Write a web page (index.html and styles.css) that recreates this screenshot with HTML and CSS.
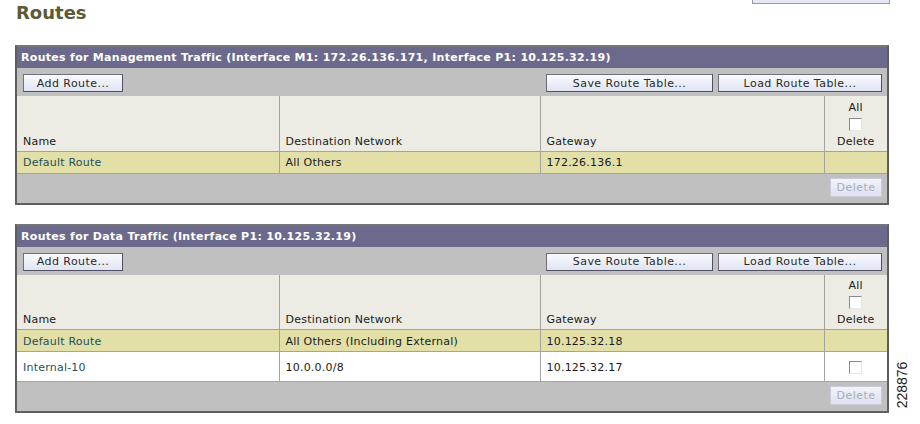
FILE: index.html
```html
<!DOCTYPE html>
<html lang="en">
<head>
  <meta charset="UTF-8" />
  <title>Routes</title>
  <link rel="stylesheet" href="styles.css">
</head>
<body>
  <div class="top-bar">
    <h1 class="page-title">Routes</h1>
    <div class="cut-button"></div>
  </div>

  <div class="panel">
    <div class="panel-head">Routes for Management Traffic (Interface M1: 172.26.136.171, Interface P1: 10.125.32.19)</div>
    <div class="toolbar">
      <button class="btn">Add Route...</button>
      <div class="toolbar-right">
        <button class="btn btn-save">Save Route Table...</button>
        <button class="btn btn-load">Load Route Table...</button>
      </div>
    </div>
    <table class="routes">
      <colgroup>
        <col class="col-name"><col class="col-dest"><col class="col-gw"><col>
      </colgroup>
      <tr class="head-row">
        <th>Name</th>
        <th>Destination Network</th>
        <th>Gateway</th>
        <th class="col-del">All<span class="check"></span>Delete</th>
      </tr>
      <tr class="row-default">
        <td><span class="link">Default Route</span></td>
        <td>All Others</td>
        <td>172.26.136.1</td>
        <td></td>
      </tr>
    </table>
    <div class="panel-foot">
      <button class="btn btn-del" disabled>Delete</button>
    </div>
  </div>

  <div class="panel">
    <div class="panel-head">Routes for Data Traffic (Interface P1: 10.125.32.19)</div>
    <div class="toolbar">
      <button class="btn">Add Route...</button>
      <div class="toolbar-right">
        <button class="btn btn-save">Save Route Table...</button>
        <button class="btn btn-load">Load Route Table...</button>
      </div>
    </div>
    <table class="routes">
      <colgroup>
        <col class="col-name"><col class="col-dest"><col class="col-gw"><col>
      </colgroup>
      <tr class="head-row">
        <th>Name</th>
        <th>Destination Network</th>
        <th>Gateway</th>
        <th class="col-del">All<span class="check"></span>Delete</th>
      </tr>
      <tr class="row-default">
        <td><span class="link">Default Route</span></td>
        <td>All Others (Including External)</td>
        <td>10.125.32.18</td>
        <td></td>
      </tr>
      <tr class="row-plain">
        <td><span class="link">Internal-10</span></td>
        <td>10.0.0.0/8</td>
        <td>10.125.32.17</td>
        <td class="cell-check"><span class="check"></span></td>
      </tr>
    </table>
    <div class="panel-foot">
      <button class="btn btn-del" disabled>Delete</button>
    </div>
  </div>

  <div class="fig-id">228876</div>
</body>
</html>
```

FILE: styles.css
```css
body {
  margin: 0;
  padding: 0 31px 0 15px;
  font-family: "DejaVu Sans", Verdana, sans-serif;
  font-size: 11px;
  letter-spacing: 0.22px;
  color: #1a1a1a;
  background: #fff;
  position: relative;
  width: 874px;
}
.top-bar {
  display: flex;
  justify-content: space-between;
  align-items: flex-start;
  height: 45px;
}
.page-title {
  margin: 2px 0 0 1px;
  font-size: 18px;
  font-weight: bold;
  letter-spacing: 0;
  color: #5b5b33;
}
.cut-button {
  width: 136px;
  height: 3px;
  margin-right: -1px;
  border: 1px solid #9a9aa2;
  border-top: none;
  background: #e4e8f2;
}
.panel {
  border: 2px solid #5e5e5e;
  border-top-color: #77777a;
  margin-bottom: 19px;
  background: #c0c0c0;
}
.panel-head {
  background: #6b6a8c;
  color: #fff;
  font-weight: bold;
  font-size: 11px;
  letter-spacing: 0.3px;
  height: 21px;
  line-height: 22px;
  padding-left: 4px;
}
.toolbar {
  display: flex;
  justify-content: space-between;
  padding: 6px 5px 4px 6px;
  background: #c0c0c0;
}
.toolbar-right {
  display: flex;
  gap: 5px;
}
.btn {
  font-family: "DejaVu Sans", Verdana, sans-serif;
  font-size: 11px;
  letter-spacing: 0.45px;
  height: 18px;
  padding: 0;
  width: 100px;
  color: #2a2a2a;
  border: 1px solid #6e6e7c;
  border-right-color: #50505e;
  border-bottom-color: #50505e;
  background: linear-gradient(#fafbfe, #dfe4f3);
}
.btn-save { width: 167px; }
.btn-load { width: 164px; }
.btn-del {
  width: 52px;
  height: 19px;
  color: #a8acb8;
  border: 1px solid #c8ccd8;
  background: linear-gradient(#f2f4fa, #dde2f0);
}
.routes {
  width: 100%;
  border-collapse: collapse;
  table-layout: fixed;
}
.col-name { width: 262px; }
.col-dest { width: 261px; }
.col-gw { width: 284px; }
.routes th,
.routes td {
  border-left: 1px solid #a3a3a0;
  text-align: left;
  font-weight: normal;
  padding: 1px 6px 0;
  white-space: nowrap;
}
.routes th:first-child,
.routes td:first-child {
  border-left: none;
}
.head-row th {
  background: #ecece4;
  height: 55px;
  vertical-align: bottom;
  padding-bottom: 3px;
  box-sizing: border-box;
}
.routes .col-del {
  text-align: center;
  padding: 0 0 3px;
}
.check {
  display: block;
  width: 11px;
  height: 11px;
  margin: 4px auto 4px;
  border: 1px solid #8a8a8a;
  border-right-color: #e8e8e8;
  border-bottom-color: #e8e8e8;
  background: #fff;
}
.row-default td {
  background: #e2dfa7;
  height: 20px;
  border-top: 1px solid #a3a3a0;
  border-bottom: 1px solid #a3a3a0;
}
.row-plain td {
  background: #fff;
  height: 28px;
  border-bottom: 1px solid #a3a3a0;
}
.cell-check .check {
  margin: 0 auto;
}
.link {
  color: #1e4f5c;
}
.panel-foot {
  display: flex;
  justify-content: flex-end;
  padding: 4px 5px 6px;
  background: #c0c0c0;
}
.fig-id {
  position: absolute;
  left: 879px;
  top: 377px;
  transform: rotate(-90deg);
  font-family: "Liberation Sans", Arial, sans-serif;
  font-size: 14px;
  letter-spacing: 0;
}
```
